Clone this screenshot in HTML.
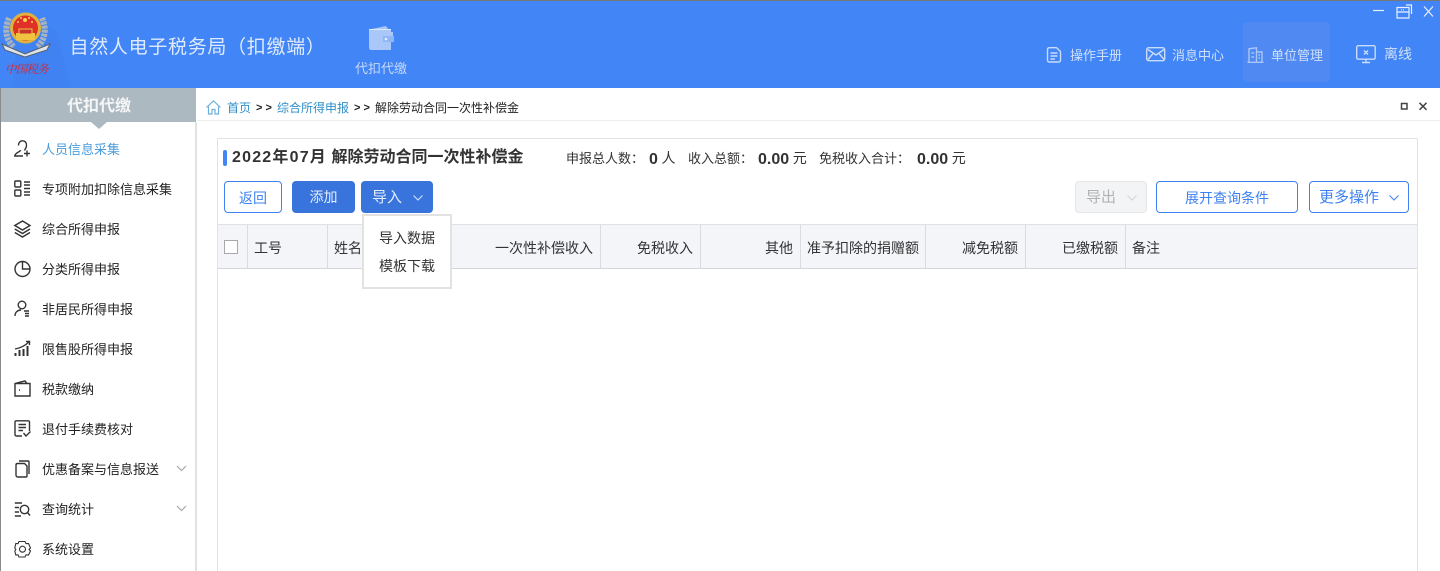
<!DOCTYPE html>
<html lang="zh"><head><meta charset="utf-8"><title>自然人电子税务局（扣缴端）</title>
<style>
*{box-sizing:border-box;margin:0;padding:0}
html,body{width:1440px;height:571px;overflow:hidden;background:#fff}
body{position:relative;font-family:"Liberation Sans","Noto Sans CJK SC",sans-serif;font-size:13px;color:#333}
.a{position:absolute;white-space:nowrap}
svg{position:absolute;overflow:visible;fill:none}
.m{left:42px;font-size:13px;color:#222;line-height:20px}
.ic{stroke:#333;stroke-width:1.400;left:14px}
.h{color:#cfe0fb;font-size:13px;line-height:18px}
.hi{stroke:#c9dcfb;stroke-width:1.400}
.th{top:225px;height:43px;line-height:46px;font-size:14px;color:#333;border-right:1px solid #d9dbe0;padding:0 7px}
.btn{height:32px;border-radius:4px;line-height:33px;text-align:center;font-size:14px}
.ol{border:1px solid #3d82f0;color:#3d82f0;background:#fff;line-height:32px}
.fl{background:#3874dc;color:#e6eefc}
b{font-size:16px;vertical-align:-.5px}
.u{font-size:14px}
</style></head><body>
<div class="a" style="left:0;top:0;width:1440px;height:88px;background:#4285f6"></div>
<div class="a" style="left:0;top:0;width:1440px;height:1px;background:#777"></div>
<svg style="left:0;top:0" width="80" height="88"><path d="M20 8 L56 30 L71 88 L12 88Z" fill="#4082f2"/></svg>
<svg style="left:0;top:10px" width="54" height="68">
<path d="M9 8C4 20 6 30 14 37M42 8C47 20 45 30 37 37" stroke="#a9b3bf" stroke-width="6" stroke-dasharray="3 1"/>
<path d="M2 34L25 44L50 34L47 40L25 47L5 40Z" fill="#dfe4ea" stroke="#59616d" stroke-width="1"/>
<circle cx="25.500" cy="18" r="13" fill="#e13027"/><circle cx="25.500" cy="18" r="14" stroke="#e1b23b" stroke-width="3"/>
<path d="M16 23H35V30H16Z" fill="#f0c23f"/><path d="M19 19H32V24H19Z" fill="#c9342b" stroke="#f0c23f"/>
<circle cx="25" cy="10" r="2" fill="#f5d24b"/><circle cx="18" cy="12" r="1" fill="#f5d24b"/><circle cx="32" cy="12" r="1" fill="#f5d24b"/><circle cx="21" cy="8" r="1" fill="#f5d24b"/><circle cx="29" cy="8" r="1" fill="#f5d24b"/>
</svg>
<div class="a" style="left:5px;top:61px;color:#d9232c;font:italic 400 11.500px/16px 'Noto Serif CJK SC',serif;letter-spacing:-.8px">中国税务</div>
<div class="a" style="left:69.500px;top:34px;font-size:19px;line-height:28px;color:#dfeafc;letter-spacing:.7px">自然人电子税务局（扣缴端）</div>
<svg style="left:368px;top:25px" width="26" height="26"><path d="M1 4.500L18 1L20 4H23V7H25V16H23V25H3Q1 25 1 22Z" fill="#a9c7f9"/><path d="M15 11H26V17H15Z" fill="#8fb6f7"/><circle cx="18" cy="14" r="1.300" fill="#e4eefd"/><path d="M1 4.500H23" stroke="#dce8fd" stroke-width="1"/></svg>
<div class="a h" style="left:355px;top:60px;color:#c4d8fa">代扣代缴</div>

<div class="a" style="left:1243px;top:22px;width:87px;height:60px;border-radius:4px;background:#5089f2"></div>
<svg class="hi" style="left:1046px;top:47px" width="16" height="16"><path d="M1.500 2.500Q1.500 .7 3.500 .7H10.500L14.500 4.500V13Q14.500 15 12.500 15H3.500Q1.500 15 1.500 13Z M4.500 6H11.500M4.500 9H11.500M4.500 12H9" class="hi"/></svg>
<div class="a h" style="left:1070px;top:47px">操作手册</div>
<svg class="hi" style="left:1146px;top:47px" width="20" height="15"><rect x=".7" y=".7" width="18" height="13" rx="2"/><path d="M2 2.500L10 8L18 2.500M2 12.500L7 6.500M18 12.500L13 6.500"/></svg>
<div class="a h" style="left:1172px;top:47px">消息中心</div>
<svg class="hi" style="left:1247px;top:47px;stroke:#a9c6f8" width="17" height="16"><path d="M.5 15.300H16.500M2 15V1.800L9.500.8V15M9.500 5H15V15M4.500 6H7M4.500 10H7M11.500 8H13M11.500 11H13"/></svg>
<div class="a h" style="left:1271px;top:47px">单位管理</div>
<svg class="hi" style="left:1356px;top:45px" width="20" height="18"><rect x=".7" y=".7" width="18.500" height="13.500" rx="1.500"/><path d="M10 14.500V17.500M6 17.500H14M8 5.500L12 9.500M12 5.500L8 9.500"/></svg>
<div class="a h" style="left:1384px;top:45px;font-size:14px">离线</div>

<svg style="left:1373px;top:4px;stroke:#e8f0fe;stroke-width:1.200" width="60" height="14">
<path d="M0 6.500H11"/><path d="M24 3.500H36V14H24Z M24 8H36M33 1H38.500V10" /><path d="M28 5.800H32" stroke-dasharray="1 1"/><path d="M51 2.500L60 12.500M60 2.500L51 12.500"/></svg>

<!-- sidebar -->
<div class="a" style="left:0;top:88px;width:196px;height:34px;background:#adb9c1"></div>
<div class="a" style="left:1px;top:88px;width:196px;height:34px;text-align:center;line-height:37px;font-size:16px;font-weight:700;color:#f4f6f7">代扣代缴</div>
<svg style="left:91px;top:122px" width="16" height="7"><path d="M0 0H16L8 7Z" fill="#adb9c1"/></svg>
<div class="a" style="left:0;top:88px;width:1px;height:483px;background:#8a8a8a"></div>
<div class="a" style="left:195px;top:122px;width:2px;height:449px;background:#e2e2e2"></div>

<svg class="ic" style="top:140px" width="18" height="18"><path d="M4.500 5.500C4.500 2.500 6 .8 8.500 .8C11 .8 12.500 2.500 12.500 5.500C12.500 8 11 9 10.500 10.500M6.500 10C6.500 12 1 12.500 .8 16H9M13 10.500V16.500M10 13.500H16"/></svg>
<div class="a m" style="top:140px;color:#4a9cdc">人员信息采集</div>
<svg class="ic" style="top:180px" width="18" height="18"><rect x=".8" y="1" width="6" height="6" rx="1"/><rect x=".8" y="10" width="6" height="6" rx="1"/><path d="M10 2H16M10 5H16M10 8.500H16M10 12H16M10 15H16"/></svg>
<div class="a m" style="top:180px">专项附加扣除信息采集</div>
<svg class="ic" style="top:220px" width="18" height="18"><path d="M.8 5.500L8.500 1L16 5.500L8.500 10ZM.8 9L8.500 13.500L16 9M.8 12.500L8.500 17L16 12.500"/></svg>
<div class="a m" style="top:220px">综合所得申报</div>
<svg class="ic" style="top:260px" width="18" height="18"><path d="M16 9A7.500 7.500 0 1 1 8.500 1.500A7.500 7.500 0 0 1 16 9ZM8.500 1.500V9H16"/></svg>
<div class="a m" style="top:260px">分类所得申报</div>
<svg class="ic" style="top:300px" width="18" height="18"><circle cx="8" cy="5" r="3.800"/><path d="M1 16C1 12 4 10 7 10M10 11H15M11 13.500H15M11 16H15"/></svg>
<div class="a m" style="top:300px">非居民所得申报</div>
<svg class="ic" style="top:340px" width="18" height="18"><path d="M1.500 16V13M5.500 16V10M9.500 16V9M13.500 16V6" stroke-width="2"/><path d="M1 9C6 8 11 6 15 1.800M12 1.500H15.500V5"/></svg>
<div class="a m" style="top:340px">限售股所得申报</div>
<svg class="ic" style="top:380px" width="18" height="18"><path d="M1 3.500L11 .9L13 3.500H16V16H1ZM1 3.500H13M5 10H6"/></svg>
<div class="a m" style="top:380px">税款缴纳</div>
<svg class="ic" style="top:420px" width="18" height="18"><path d="M8 16H2.500Q1 16 1 14.500V2Q1 .8 2.500 .8H14Q15.500 .8 15.500 2V11M4.500 4.500H12M4.500 7.500H12M4.500 10.500H9M9.500 13L12 16L16.500 11.500"/></svg>
<div class="a m" style="top:420px">退付手续费核对</div>
<svg class="ic" style="top:460px" width="18" height="18"><path d="M5 1H14Q15 1 15 2V14M3.500 3.500H10.500L13 6V16Q13 17 12 17H4Q2 17 2 15V5Q2 3.500 3.500 3.500Z"/></svg>
<div class="a m" style="top:460px">优惠备案与信息报送</div>
<svg style="left:176px;top:465px;stroke:#a8a8a8;stroke-width:1.200" width="11" height="7"><path d="M1 1L5.500 5.500L10 1"/></svg>
<svg class="ic" style="top:500px" width="18" height="18"><path d="M.8 3H8M.8 7.500H5M.8 12H5M.8 16H7"/><circle cx="10.500" cy="9.500" r="4.200"/><path d="M13.500 12.500L16 15.500"/></svg>
<div class="a m" style="top:500px">查询统计</div>
<svg style="left:176px;top:505px;stroke:#a8a8a8;stroke-width:1.200" width="11" height="7"><path d="M1 1L5.500 5.500L10 1"/></svg>
<svg class="ic" style="top:540px;stroke-width:1.100" width="18" height="18"><path d="M5 1.500H11L12 3.700L14.500 3.500L16.500 8L15 9.500L16.500 11L14.500 15L12 14.800L11 17H5L4 14.800L1.800 15L.8 11L1.800 9.500L.8 8L1.800 3.500L4 3.700Z"/><circle cx="8.500" cy="9.200" r="3"/></svg>
<div class="a m" style="top:540px">系统设置</div>

<!-- breadcrumb -->
<svg style="left:206px;top:100px;stroke:#6fb0de;stroke-width:1.200" width="16" height="15"><path d="M.5 7.500L7.500.8L14.500 7.500M2.500 6.500V14H6V9.500H9V14H12.500V6.500"/></svg>
<div class="a" style="left:227px;top:98px;font-size:12px;line-height:20px;color:#2f8fc9">首页</div>
<div class="a" style="left:256px;top:98px;font-size:11px;font-weight:700;line-height:20px;color:#222">&gt; &gt;</div>
<div class="a" style="left:277px;top:98px;font-size:12px;line-height:20px;color:#2f8fc9">综合所得申报</div>
<div class="a" style="left:354px;top:98px;font-size:11px;font-weight:700;line-height:20px;color:#222">&gt; &gt;</div>
<div class="a" style="left:375px;top:98px;font-size:12px;line-height:20px;color:#222">解除劳动合同一次性补偿金</div>
<div class="a" style="left:197px;top:120px;width:1243px;height:1px;background:#eee"></div>
<svg style="left:1400px;top:102px;stroke:#444;stroke-width:1.500" width="30" height="9"><path d="M1.500 1.500H7V7H1.500Z"/><path d="M19.500 .8L26.500 7.800M26.500 .8L19.500 7.800"/></svg>

<!-- panel -->
<div class="a" style="left:217px;top:138px;width:1201px;height:433px;border:1px solid #e3e3e3;border-bottom:0"></div>
<div class="a" style="left:223px;top:150px;width:4px;height:16px;border-radius:2px;background:#4285f6"></div>
<div class="a" style="left:232px;top:146px;font-size:16px;line-height:23px;font-weight:700;color:#333"><span style="letter-spacing:1.200px">2022年07月</span>&nbsp;解除劳动合同一次性补偿金</div>
<div class="a" style="left:566px;top:148px;font-size:13px;line-height:20px">申报总人数：<b style="margin-left:5px">0</b> <span class="u">人</span></div>
<div class="a" style="left:688px;top:148px;font-size:13px;line-height:20px">收入总额：<b style="margin-left:5px">0.00</b> <span class="u">元</span></div>
<div class="a" style="left:819px;top:148px;font-size:13px;line-height:20px">免税收入合计：<b style="margin-left:7px">0.00</b> <span class="u">元</span></div>

<div class="a btn ol" style="left:224px;top:181px;width:58px">返回</div>
<div class="a btn fl" style="left:292px;top:181px;width:63px">添加</div>
<div class="a btn fl" style="left:361px;top:181px;width:72px;text-align:left;padding-left:11px;font-size:15px">导入</div>
<svg style="left:413px;top:195px;stroke:#dce8fc;stroke-width:1" width="10" height="6"><path d="M.5.500L5 5L9.500.500"/></svg>
<div class="a btn" style="left:1075px;top:181px;width:72px;background:#f3f4f6;border:1px solid #e6e6e8;color:#b2b2b2;text-align:left;padding-left:10px;line-height:32px;font-size:15px">导出</div>
<svg style="left:1127px;top:195px;stroke:#d4d4d4;stroke-width:1" width="10" height="6"><path d="M.5.500L5 5L9.500.500"/></svg>
<div class="a btn ol" style="left:1156px;top:181px;width:142px;font-size:14px">展开查询条件</div>
<div class="a btn ol" style="left:1309px;top:181px;width:100px;text-align:left;padding-left:9px;font-size:15px">更多操作</div>
<svg style="left:1389px;top:195px;stroke:#3d82f0;stroke-width:1" width="10" height="6"><path d="M.5.500L5 5L9.500.500"/></svg>

<!-- table -->
<div class="a" style="left:218px;top:224px;width:1199px;height:45px;background:#f3f5f9;border-top:1px solid #e0e1e5;border-bottom:1px solid #d6d7db"></div>
<div class="a th" style="left:218px;width:30px"></div>
<div class="a" style="left:224px;top:240px;width:14px;height:14px;border:1px solid #a9a9a9;background:#fff"></div>
<div class="a th" style="left:248px;width:80px;padding-left:6px">工号</div>
<div class="a th" style="left:328px;width:100px;padding-left:6px">姓名</div>
<div class="a th" style="left:428px;width:173px;text-align:right">一次性补偿收入</div>
<div class="a th" style="left:601px;width:100px;text-align:right">免税收入</div>
<div class="a th" style="left:701px;width:100px;text-align:right">其他</div>
<div class="a th" style="left:801px;width:125px;text-align:right;padding:0 6px">准予扣除的捐赠额</div>
<div class="a th" style="left:926px;width:100px;text-align:right">减免税额</div>
<div class="a th" style="left:1026px;width:100px;text-align:right">已缴税额</div>
<div class="a th" style="left:1126px;width:291px;border:0;padding-left:6px">备注</div>

<!-- dropdown -->
<div class="a" style="left:362px;top:214px;width:90px;height:75px;background:#fff;border:2px solid #e2e2e2"></div>
<div class="a" style="left:379px;top:228px;font-size:14px;line-height:20px">导入数据</div>
<div class="a" style="left:379px;top:256px;font-size:14px;line-height:20px">模板下载</div>
</body></html>
